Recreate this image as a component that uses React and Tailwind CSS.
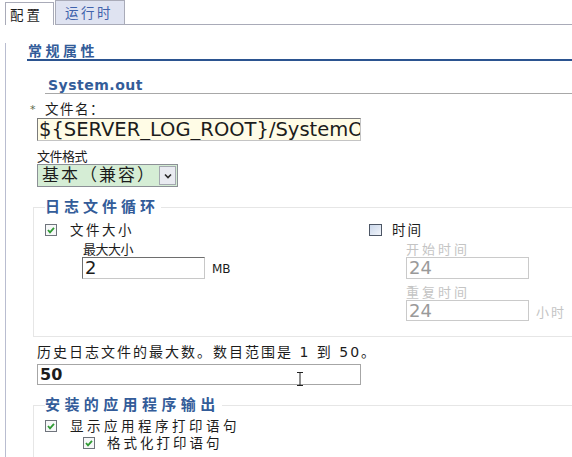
import React from "react";

const font = "font-['DejaVu_Sans','Noto_Sans_CJK_SC',sans-serif]";

function Checked({ className = "" }) {
	return (
		<svg width="12" height="12" viewBox="0 0 12 12" className={className}>
			<rect x="0.5" y="0.5" width="11" height="11" fill="#f6f7f8" stroke="#6f747c" />
			<polyline points="3,6 5,8.3 9,3.8" fill="none" stroke="#2f9a33" strokeWidth="1.8" />
		</svg>
	);
}

function Unchecked() {
	return (
		<svg width="13" height="12" viewBox="0 0 13 12">
			<defs>
				<linearGradient id="ub" x1="0" y1="0" x2="1" y2="1">
					<stop offset="0" stopColor="#c9d6ea" />
					<stop offset="1" stopColor="#f2f5fa" />
				</linearGradient>
			</defs>
			<rect x="0.5" y="0.5" width="12" height="11" fill="url(#ub)" stroke="#4d5665" />
		</svg>
	);
}

function Legend({ children, track = "tracking-[4px]" }) {
	return (
		<legend className={`text-[15px] font-bold leading-[16px] text-[#335c99] pr-[2px] ${track}`}>
			{children}
		</legend>
	);
}

export default function App() {
	return (
		<div className={`w-[572px] h-[457px] overflow-hidden bg-white text-[#1c1c1c] ${font}`}>
			{/* tabs */}
			<div className="flex h-[25px] items-end pl-[5px]">
				<div className="h-[23px] w-[49px] border-x border-t border-[#a9abb8] bg-white pl-[4px] pt-[4px] text-[13.5px] leading-[16px] tracking-[3px]">
					配置
				</div>
				<div className="ml-[1px] h-[25px] w-[70px] border border-[#a9abb8] bg-[#dfe3f1] pl-[9px] pt-[4px] text-[13.5px] leading-[16px] tracking-[2.5px] text-[#3f63ad]">
					运行时
				</div>
				<div className="h-[25px] flex-1 border-b border-[#a9abb8]" />
			</div>

			<div className="ml-[5px] h-[432px] border-l border-[#b9bdd0] pl-[21px]">
				<div className="mt-[18px] h-[18px] border-b-2 border-[#2b5390] pl-[1px] text-[14px] font-bold leading-[16px] tracking-[3.5px] text-[#335c99]">
					常规属性
				</div>

				<div className="mt-[17px] ml-[18px] h-[16px] border-b border-[#a8a8a8] pl-[3px] text-[14px] font-bold leading-[15px] tracking-[0.5px] text-[#335c99]">
					System.out
				</div>

				<div className="mt-[7px] flex h-[16px] text-[13.5px] leading-[16px]">
					<span className="ml-[3px] w-[15px] pt-[3px] text-[11px] leading-[12px] text-[#5b6b4b]">*</span>
					<span className="tracking-[1.5px]">文件名：</span>
				</div>

				<div className="mt-[1px] ml-[10px] h-[23px] w-[324px] overflow-hidden whitespace-nowrap border border-t-[#7b7b7b] border-l-[#7b7b7b] border-r-[#c4c4c4] border-b-[#c4c4c4] bg-[#fffce6] pl-[1px] text-[19.5px] leading-[21px]">
					{"${SERVER_LOG_ROOT}/SystemOut.log"}
				</div>

				<div className="mt-[8px] ml-[10px] text-[13px] leading-[15px] tracking-[-0.5px]">文件格式</div>

				<div className="ml-[10px] flex h-[23px] w-[141px] border border-[#8c9096] bg-[#d5edd5]">
					<div className="flex-1 pl-[4px] text-[17px] leading-[21px] tracking-[2px]">基本（兼容）</div>
					<div className="my-[1px] mr-[1px] flex w-[17px] items-center justify-center border border-[#a4a8b0] bg-[#e9ebf1]">
						<svg width="8" height="6" viewBox="0 0 8 6">
							<polyline points="1,1.5 4,4.5 7,1.5" fill="none" stroke="#2a2a2a" strokeWidth="1.6" />
						</svg>
					</div>
				</div>

				<fieldset className="mt-[12px] ml-[6px] w-[580px] border border-[#e6e6e6] px-[11px] pb-[15px]">
					<Legend>日志文件循环</Legend>
					<div className="flex">
						<div className="w-[324px]">
							<div className="mt-[7px] flex h-[16px] items-center">
								<Checked />
								<span className="ml-[13px] text-[13.5px] tracking-[2.5px]">文件大小</span>
							</div>
							<div className="mt-[5px] ml-[38px] text-[13px] leading-[14px] tracking-[-0.5px]">最大大小</div>
							<div className="ml-[37px] flex items-end">
								<div className="h-[22px] w-[123px] border border-t-[#6e6e6e] border-l-[#6e6e6e] border-r-[#c8c8c8] border-b-[#c8c8c8] pl-[2px] text-[18px] leading-[20px]">
									2
								</div>
								<span className="mb-[3px] ml-[7px] text-[12px] leading-[14px]">MB</span>
							</div>
						</div>
						<div>
							<div className="mt-[7px] flex h-[16px] items-center">
								<Unchecked />
								<span className="ml-[10px] text-[13.5px] tracking-[2px]">时间</span>
							</div>
							<div className="mt-[5px] ml-[37px] text-[13px] leading-[14px] tracking-[3px] text-[#c4c4c4]">开始时间</div>
							<div className="ml-[37px] h-[22px] w-[123px] border border-[#cacaca] pl-[2px] text-[18px] leading-[20px] text-[#9a9a9a]">
								24
							</div>
							<div className="mt-[7px] ml-[37px] text-[13px] leading-[14px] tracking-[3px] text-[#c4c4c4]">重复时间</div>
							<div className="ml-[37px] flex items-end">
								<div className="h-[21px] w-[123px] border border-[#cacaca] pl-[2px] text-[18px] leading-[19px] text-[#9a9a9a]">
									24
								</div>
								<span className="mb-[1px] ml-[7px] whitespace-nowrap text-[13px] leading-[14px] tracking-[2px] text-[#c4c4c4]">小时</span>
							</div>
						</div>
					</div>
				</fieldset>

				<div className="mt-[6px] ml-[10px] whitespace-nowrap text-[14px] leading-[19px] tracking-[2px]">
					历史日志文件的最大数。数目范围是 1 到 50。
				</div>
				<div className="relative mt-[2px] ml-[10px] h-[21px] w-[324px] border border-[#a6a6a6] pl-[2px] text-[16px] font-bold leading-[19px]">
					50
					<svg width="8" height="14" viewBox="0 0 8 14" className="absolute left-[258px] top-[7px]">
						<path d="M1 0.5h6M4 0.5v13M1 13.5h6" fill="none" stroke="#222" strokeWidth="1" />
					</svg>
				</div>

				<fieldset className="mt-[12px] ml-[6px] w-[580px] border border-[#e6e6e6] px-[11px] pb-[15px]">
					<Legend track="tracking-[4.4px]">安装的应用程序输出</Legend>
					<div className="mt-[5px] flex h-[16px] items-center">
						<Checked />
						<span className="ml-[13px] text-[13.5px] tracking-[3.5px]">显示应用程序打印语句</span>
					</div>
					<div className="mt-[1px] flex h-[16px] items-center pl-[38px]">
						<Checked />
						<span className="ml-[12px] text-[13.5px] tracking-[3px]">格式化打印语句</span>
					</div>
				</fieldset>
			</div>
		</div>
	);
}
